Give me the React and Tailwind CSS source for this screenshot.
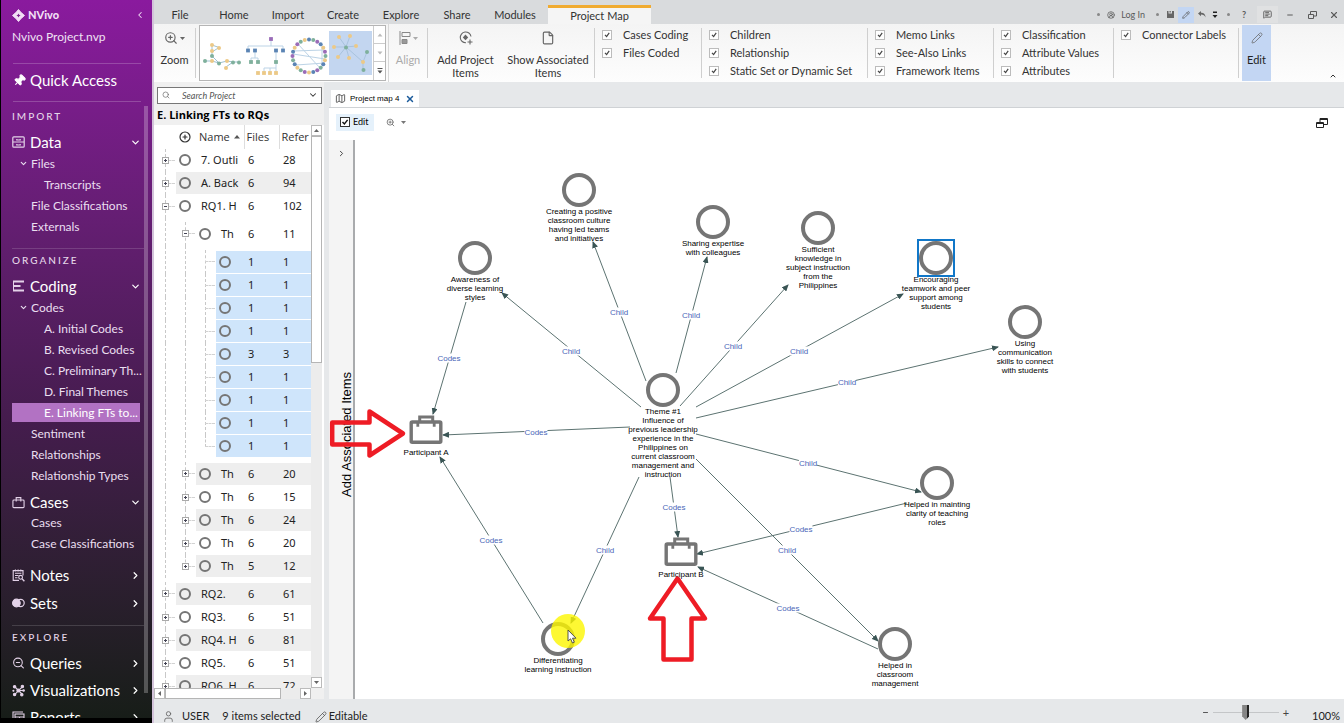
import React from "react";
import {
  Pin, ChevronLeft, ChevronRight, ChevronDown, ChevronUp, ZoomIn, ZoomOut,
  File as FileIcon, Pencil, User, CircleUserRound, MessageSquareText, Minus, X, Search,
  Map as MapIcon, CirclePlus,
} from "lucide-react";

/* ---------- sidebar ---------- */

function Logo() {
  return (
    <svg viewBox="0 0 14 14" className="size-[13px]" fill="#f1dff5">
      <path d="M7 0.500L9.300 3.200L10.800 4.700L13.500 7L10.800 9.300L9.300 10.800L7 13.500L4.700 10.800L3.200 9.300L0.500 7L3.200 4.700L4.700 3.200Z" stroke="#f1dff5" strokeLinejoin="round" />
      <path d="M7 4.800L7.700 6.300L9.200 7L7.700 7.700L7 9.200L6.300 7.700L4.800 7L6.300 6.300Z" fill="#7a1c8d" />
    </svg>
  );
}

function DrawerIcon() {
  return (
    <svg viewBox="0 0 13 12" className="h-3 w-[13px]" fill="none" stroke="currentColor" strokeWidth="1.2">
      <rect x="0.8" y="0.8" width="11.4" height="10.4" rx="1" />
      <path d="M1 6H12M4.8 3V4H8.2V3M4.8 8V9H8.2V8" />
    </svg>
  );
}

function CodingIcon() {
  return (
    <svg viewBox="0 0 13 12" className="h-3 w-[13px]" fill="none" stroke="currentColor" strokeWidth="1.8">
      <path d="M1 1.500H12M1 6H8.500M1 10.500H12" />
      <path d="M1.500 1V11" strokeWidth="1" />
    </svg>
  );
}

function CaseIcon() {
  return (
    <svg viewBox="0 0 14 13" className="h-[13px] w-[14px]" fill="none" stroke="currentColor" strokeWidth="1.2">
      <rect x="1" y="3.8" width="12" height="8.2" rx="1" />
      <path d="M4.500 5.500V1.200H9.500V5.500" />
    </svg>
  );
}

function NotesIcon() {
  return (
    <svg viewBox="0 0 13 13" className="size-[13px]" fill="none" stroke="currentColor" strokeWidth="1.1">
      <path d="M7 11.400H1.200V1.600H11V6.500M3.400 0.400V2.400M6.100 0.400V2.400M8.800 0.400V2.400M3 4.300H9.400M3 6.500H6.500M3 8.700H5.500" />
      <circle cx="8.600" cy="8.300" r="1.900" />
      <path d="M10 9.800L12.400 12.200" strokeWidth="1.400" />
    </svg>
  );
}

function SetsIcon() {
  return (
    <svg viewBox="0 0 13 10" className="h-[10px] w-[13px]" fill="none" stroke="currentColor" strokeWidth="1.2">
      <circle cx="4.4" cy="5" r="3.8" fill="currentColor" />
      <circle cx="8.6" cy="5" r="3.6" />
    </svg>
  );
}

function VisualIcon() {
  return (
    <svg viewBox="0 0 13 13" className="size-[13px]" fill="currentColor" stroke="currentColor" strokeWidth="1.1">
      <path d="M2.5 2.5L6.5 6.5L10.8 2.5M6.5 6.5L2.5 10.8M6.5 6.5L10.5 10.5M6.5 6.5H11.5" fill="none" />
      <circle cx="2.6" cy="2.8" r="1.2" /><circle cx="10.4" cy="2.4" r="1.2" />
      <circle cx="2.6" cy="10.4" r="1.2" /><circle cx="9.8" cy="10.8" r="1.2" />
      <circle cx="6.4" cy="6.5" r="1.5" /><circle cx="1.4" cy="6.8" r="0.5" /><circle cx="11.6" cy="6.5" r="0.8" />
    </svg>
  );
}

function ReportIcon() {
  return (
    <svg viewBox="0 0 13 13" className="size-[13px]" fill="none" stroke="currentColor" strokeWidth="1.1">
      <path d="M1 10V1H11" />
      <rect x="3" y="3" width="9" height="9" />
      <path d="M3 6H12M7.5 6V12" />
    </svg>
  );
}

function Section({ icon, label, open }) {
  return (
    <button type="button" className="flex h-7 w-full items-center gap-[5px] pr-[3px] text-left text-[15px] leading-[18px] text-white">
      <span className="flex w-[13px] justify-center text-[#e3d2e8]">{icon}</span>
      <span className="grow">{label}</span>
      {open ? <ChevronDown className="size-[11px]" strokeWidth={2.6} /> : <ChevronRight className="size-[11px]" strokeWidth={2.6} />}
    </button>
  );
}

function Leaf({ label, level = 1, open, active }) {
  return (
    <a
      href="#"
      className={
        "flex h-[21px] w-[128px] items-center whitespace-nowrap text-xs leading-4 text-[#eadff0] " +
        (level === 2 ? "pl-8 " : open ? "pl-[7px] " : "pl-[19px] ")
      }
    >
      {active ? (
        <span className="-ml-8 flex h-[19px] w-[128px] items-center bg-[#b272c3] pl-8 text-white">{label}</span>
      ) : (
        <>
          {open && <ChevronDown className="mr-[3px] size-[9px]" strokeWidth={3} />}
          {label}
        </>
      )}
    </a>
  );
}

function Sidebar() {
  return (
    <nav className="flex w-[152px] shrink-0 flex-col overflow-hidden border-b-[5px] border-l border-black bg-linear-to-b from-[#8a1a9e] via-[#451c4e] via-58% to-[#171d18] font-[Lato,sans-serif]">
      <div className="pr-[7px] pl-[11px]">
        <div className="flex h-[30px] items-center gap-[3px] text-[11px] font-black text-[#f1dff5]">
          <Logo />
          <span className="grow">NVivo</span>
          <button type="button" aria-label="Collapse navigation"><ChevronLeft className="size-[10px]" strokeWidth={2.5} /></button>
        </div>
        <div className="h-[33px] pr-2 text-xs leading-[14px] text-[#f0e2f4]">Nvivo Project.nvp</div>
        <div className="mr-1 ml-px flex h-[39px] items-center gap-1 border-y border-white/20 pb-1 text-[15px] text-white">
          <Pin className="size-[13px] rotate-45" fill="currentColor" />
          Quick Access
        </div>
      </div>
      <div className="flex min-h-0 grow pl-[11px]">
        <div className="w-[132px] shrink-0 overflow-hidden">
          <div>
            <h2 className="h-[26px] pt-2 text-[10px] leading-3 font-medium tracking-[0.2em] text-[#e4d6e8]">IMPORT</h2>
            <Section icon={<DrawerIcon />} label="Data" open />
            <div className="-mt-[3px]">
              <Leaf label="Files" open />
              <Leaf label="Transcripts" level={2} />
              <Leaf label="File Classifications" />
              <Leaf label="Externals" />
            </div>
          </div>
          <div className="pt-[11px]">
            <h2 className="h-6 border-t border-white/15 pt-[5px] text-[10px] leading-3 font-medium tracking-[0.2em] text-[#e4d6e8]">ORGANIZE</h2>
            <Section icon={<CodingIcon />} label="Coding" open />
            <div className="-mt-[3px]">
              <Leaf label="Codes" open />
              <Leaf label="A. Initial Codes" level={2} />
              <Leaf label="B. Revised Codes" level={2} />
              <Leaf label="C. Preliminary Th..." level={2} />
              <Leaf label="D. Final Themes" level={2} />
              <Leaf label="E. Linking FTs to..." level={2} active />
              <Leaf label="Sentiment" />
              <Leaf label="Relationships" />
              <Leaf label="Relationship Types" />
            </div>
            <div className="pt-[2px]">
              <Section icon={<CaseIcon />} label="Cases" open />
              <div className="-mt-1">
                <Leaf label="Cases" />
                <Leaf label="Case Classifications" />
              </div>
            </div>
            <div className="pt-[7px]">
              <Section icon={<NotesIcon />} label="Notes" />
              <Section icon={<SetsIcon />} label="Sets" />
            </div>
          </div>
          <div className="pt-2">
            <h2 className="h-6 border-t border-white/15 pt-[5px] text-[10px] leading-3 font-medium tracking-[0.2em] text-[#e4d6e8]">EXPLORE</h2>
            <div className="-space-y-px">
              <Section icon={<ZoomOut className="size-[14px]" />} label="Queries" />
              <Section icon={<VisualIcon />} label="Visualizations" />
              <Section icon={<ReportIcon />} label="Reports" />
            </div>
          </div>
        </div>
        <div className="mt-1 mb-[25px] w-1 bg-white/25" />
      </div>
    </nav>
  );
}

/* ---------- title bar and ribbon ---------- */

const tabs = [
  ["File", "w-[52px]"], ["Home", "w-[56px]"], ["Import", "w-[52px]"], ["Create", "w-[58px]"],
  ["Explore", "w-[58px]"], ["Share", "w-[54px]"], ["Modules", "w-[62px]"],
];

function Dot() {
  return <span className="block size-[3px] rounded-full bg-[#888]" />;
}

function TitleBar() {
  return (
    <header className="flex h-6 shrink-0 items-end bg-[#d9dbdd] text-[11px] text-[#333]">
      <div className="flex h-[19px] items-center">
        {tabs.map(([t, w]) => (
          <button key={t} type="button" className={"text-center leading-[19px] " + w}>{t}</button>
        ))}
      </div>
      <button type="button" className="ml-[2px] h-[19px] w-[103px] border-t-[3px] border-[#f0ab31] bg-[#f5f5f5] leading-[14px]">Project Map</button>
      <div className="ml-auto flex h-[19px] items-center pr-[5px] text-[#5a5a5a]">
        <Dot />
        <button type="button" className="ml-[7px] flex items-center gap-[6px] text-[9px]">
          <CircleUserRound className="size-2" strokeWidth={2.2} />Log In
        </button>
        <span className="ml-[11px]"><Dot /></span>
        <button type="button" aria-label="Save" className="ml-2">
          <svg viewBox="0 0 7 7" className="size-[7px]" fill="#666"><path d="M0 0H1.500V2.500H5V0H7V7H0ZM2.500 0H3.800V1.500H2.500Z" /></svg>
        </button>
        <button type="button" aria-label="Edit mode" className="ml-1 bg-[#c3d6f3] p-[4px]"><Pencil className="size-2" strokeWidth={2.2} /></button>
        <button type="button" aria-label="Undo" className="ml-1">
          <svg viewBox="0 0 8 7" className="h-[7px] w-2" fill="#666"><path d="M0 2.500L3 0V1.700C5.500 1.700 7.500 3 7.500 6.500C6.500 4.500 5.500 3.600 3 3.600V5.200Z" /></svg>
        </button>
        <button type="button" aria-label="Customize" className="mx-[6px]">
          <svg viewBox="0 0 6 8" className="h-2 w-[6px]" fill="#222"><path d="M1 0.5H5V2H1ZM0.5 4H5.5L3 7Z" /></svg>
        </button>
        <span className="ml-[3px]"><Dot /></span>
        <button type="button" aria-label="Help" className="ml-[9px] w-[10px] text-[9px] font-bold">?</button>
        <button type="button" aria-label="Feedback" className="ml-2 bg-[#e0e1e2] px-[6px] py-[4px]"><MessageSquareText className="size-[9px]" strokeWidth={2.4} /></button>
        <button type="button" aria-label="Minimize" className="ml-[8px]"><Minus className="size-2" strokeWidth={3} /></button>
        <button type="button" aria-label="Restore" className="ml-[14px]">
          <svg viewBox="0 0 9 8" className="h-2 w-[9px]" fill="none" stroke="currentColor"><path d="M0.5 3.5H5.5V7.5H0.5ZM2.5 3.5V0.5H8.5V5H5.5" /></svg>
        </button>
        <button type="button" aria-label="Close" className="ml-[12px]"><X className="size-[10px]" strokeWidth={2.6} /></button>
      </div>
    </header>
  );
}

function Check({ label, id }) {
  return (
    <label htmlFor={id} className="flex h-[18px] items-center whitespace-nowrap text-[11px] leading-[18px] text-[#333]">
      <span className="mr-[11px] grid size-[10px] place-items-center">
        <input id={id} type="checkbox" defaultChecked className="col-start-1 row-start-1 size-[10px] appearance-none border border-[#bcbcbc] bg-white" />
        <svg viewBox="0 0 8 8" className="pointer-events-none col-start-1 row-start-1 size-2" fill="none" stroke="#444" strokeWidth="1.2">
          <path d="M2 3.8L3.6 5.6L6.2 1.8" />
        </svg>
      </span>
      {label}
    </label>
  );
}

const checkGroups = [
  { w: "w-[106px]", items: ["Cases Coding", "Files Coded"] },
  { w: "w-[165px]", items: ["Children", "Relationship", "Static Set or Dynamic Set"] },
  { w: "w-[125px]", items: ["Memo Links", "See-Also Links", "Framework Items"] },
  { w: "w-[119px]", items: ["Classification", "Attribute Values", "Attributes"] },
  { w: "w-[124px]", items: ["Connector Labels"] },
];

const Y = "#ecc987", G = "#7fb09c", B = "#5b84b4", P = "#9a6cb8";

function Dots({ pts }) {
  return pts.map(([x, y, c], i) => <circle key={i} cx={x} cy={y} r="2" fill={c} />);
}
function Squares({ pts }) {
  return pts.map(([x, y, c], i) => <rect key={i} x={x - 1.9} y={y - 1.9} width="3.8" height="3.8" fill={c} />);
}

function LayoutGallery() {
  const ring = Array.from({ length: 24 }, (_, i) => {
    const a = (i / 24) * Math.PI * 2;
    return [23 + 16.5 * Math.cos(a), 22 + 16.5 * Math.sin(a), [G, Y, B, G, P, B, Y, P][i % 8]];
  });
  return (
    <div className="my-[1px] flex w-[187px] border border-[#b5b5b5] bg-white">
      <button type="button" aria-label="Organic layout" className="w-[43px] pt-[5px]">
        <svg viewBox="0 0 43 44" className="h-[44px] w-[43px]">
          <path d="M5 27H12L19 29L27 27L33 28H39M26 33L33 28M19 29L12 22V11L19 13.500L12 18" fill="none" stroke="#9fc0d0" />
          <Dots pts={[[5, 27, G], [12, 27, Y], [19, 29.5, G], [27, 27, Y], [33, 28.500, G], [39, 28.500, G], [26, 34, Y], [12, 22, G], [12, 17, Y], [12, 11, Y], [19, 14, Y]]} />
        </svg>
      </button>
      <button type="button" aria-label="Hierarchical layout" className="w-[43px] pt-[5px]">
        <svg viewBox="0 0 43 44" className="h-[44px] w-[43px]">
          <path d="M28 5V12M5 16V12H40V16M12 16V24M8 28V24H15V28M33 16V34M21 38V34H33V38M27 34V38" fill="none" stroke="#bcd3e6" />
          <Squares pts={[[28, 5, P], [5, 16.500, B], [12, 16.500, B], [33, 16.500, B], [40, 16.500, B], [8, 28, G], [15, 28, G], [33, 28, G], [15, 39, Y], [21, 39, Y], [27, 39, Y], [33, 39, Y]]} />
        </svg>
      </button>
      <button type="button" aria-label="Circular layout" className="w-[43px] pt-[5px]">
        <svg viewBox="0 0 43 44" className="h-[44px] w-[43px]">
          <path d="M12 10L34 34M36 11V34M7 17L38 16M7 20L39 25M10 31L39 29" fill="none" stroke="#bcd3e6" />
          <Dots pts={ring} />
        </svg>
      </button>
      <button type="button" aria-label="Directed layout" className="my-[5px] w-[43px] bg-[#c3d6f0]">
        <svg viewBox="0 0 43 43" className="h-[43px] w-[43px]">
          <path d="M17 15L10 5M17 15L21 4M17 15L5 15M17 15L27 14M17 15L9 25M17 15L20 26M17 15L34 30L38 20M34 30V38" fill="none" stroke="#a9c3dd" />
          <Dots pts={[[17, 15.500, G], [10, 5, Y], [21, 4, Y], [5, 15, Y], [27, 14, Y], [9, 25, Y], [20, 26, Y], [34, 30, Y], [38, 20, G], [34.500, 38, G]]} />
        </svg>
      </button>
      <div className="ml-auto grid w-3 grid-rows-3 border-l border-[#ccc] text-[#888]">
        {["Previous layouts", "Next layouts", "More layouts"].map((l, i) => (
          <button key={l} type="button" aria-label={l} className="grid place-items-center border-b border-[#ccc] last:border-0">
            <svg viewBox="0 0 6 6" className="size-[6px]" fill={i === 2 ? "#555" : "#bbb"}>
              {i === 0 && <path d="M0.500 4.500H5.500L3 1.500Z" />}
              {i === 1 && <path d="M0.500 1.500H5.500L3 4.500Z" />}
              {i === 2 && <path d="M0.500 2.500H5.500L3 5.500ZM0.500 0H5.500V1H0.500Z" />}
            </svg>
          </button>
        ))}
      </div>
    </div>
  );
}

function AddItemsIcon() {
  return (
    <svg viewBox="0 0 14 14" className="size-[14px]" fill="none" stroke="#666" strokeWidth="1.1">
      <path d="M12 5.500A5.400 5.400 0 1 0 7 11.800" />
      <path d="M6.500 3.600L9.200 6.400L6.500 9.200L3.800 6.400Z" fill="#666" stroke="none" />
      <path d="M11 8.500V13.500M8.500 11H13.500" />
    </svg>
  );
}

function Sep() {
  return <div className="my-1 w-px shrink-0 bg-[#cfcfcf]" />;
}

function Ribbon() {
  return (
    <section className="flex h-[58px] shrink-0 bg-linear-to-b from-[#f4f4f4] to-[#fdfdfd] text-[11px] leading-[13px] text-[#333]">
      <button type="button" className="flex w-[41px] shrink-0 flex-col items-center pt-[7px]">
        <span className="flex items-center gap-[2px] text-[#666]"><ZoomIn className="size-[14px]" /><svg viewBox="0 0 5 3" className="h-[3px] w-[5px]" fill="currentColor"><path d="M0 0H5L2.500 3Z" /></svg></span>
        <span className="pt-2">Zoom</span>
      </button>
      <Sep />
      <div className="ml-[3px] flex shrink-0"><LayoutGallery /></div>
      <button type="button" className="ml-[2px] flex w-[39px] shrink-0 flex-col items-center border-l border-[#d8d8d8] pt-[7px] text-[#aaa]">
        <span className="flex items-center gap-[2px]">
          <svg viewBox="0 0 12 14" className="h-[14px] w-3" fill="none" stroke="#888"><path d="M1 0V14M3 1.500H11V5.500H3Z" /><path d="M3 8.500H8V12.500H3Z" fill="#999" /></svg>
          <svg viewBox="0 0 5 3" className="h-[3px] w-[5px]" fill="currentColor"><path d="M0 0H5L2.500 3Z" /></svg>
        </span>
        <span className="pt-2">Align</span>
      </button>
      <Sep />
      <button type="button" className="flex w-[75px] shrink-0 flex-col items-center pt-[7px]">
        <AddItemsIcon />
        <span className="w-16 pt-2">Add Project Items</span>
      </button>
      <button type="button" className="flex w-[90px] shrink-0 flex-col items-center pt-[7px]">
        <FileIcon className="size-[14px] text-[#666]" />
        <span className="w-[88px] pt-2">Show Associated Items</span>
      </button>
      <div className="w-px" />
      {checkGroups.map((g, i) => (
        <React.Fragment key={i}>
          <Sep />
          <div className={"shrink-0 pt-[2px] pl-[7px] " + g.w}>
            {g.items.map((t, j) => <Check key={t} label={t} id={"opt-" + i + "-" + j} />)}
          </div>
        </React.Fragment>
      ))}
      <Sep />
      <button type="button" className="my-[1px] ml-[3px] flex w-[29px] shrink-0 flex-col items-center bg-[#c3d6f3] pt-[7px] text-[#222]">
        <Pencil className="size-3 text-[#666]" strokeWidth={1.5} />
        <span className="pt-[9px]">Edit</span>
      </button>
      <button type="button" aria-label="Collapse ribbon" className="mt-auto ml-auto pr-[7px] pb-[2px]"><ChevronUp className="size-2" strokeWidth={3} /></button>
    </section>
  );
}

/* ---------- list view ---------- */

const sel = [1, 1, 1, 1, 3, 1, 1, 1, 1].map((n, i) => ({
  level: 2, name: "", files: n, refs: n, sel: true, gap: i === 0, last: i === 8,
}));

const rows = [
  { level: 0, name: "7. Outli", files: 6, refs: 28 },
  { level: 0, name: "A. Back", files: 6, refs: 94, alt: true },
  { level: 0, name: "RQ1. H", files: 6, refs: 102, open: true },
  { level: 1, name: "Th", files: 6, refs: 11, open: true, gap: true },
  ...sel,
  { level: 1, name: "Th", files: 6, refs: 20, alt: true, gap: true },
  { level: 1, name: "Th", files: 6, refs: 15 },
  { level: 1, name: "Th", files: 6, refs: 24, alt: true },
  { level: 1, name: "Th", files: 6, refs: 20 },
  { level: 1, name: "Th", files: 5, refs: 12, alt: true, last: true },
  { level: 0, name: "RQ2.", files: 6, refs: 61, alt: true, gap: true },
  { level: 0, name: "RQ3.", files: 6, refs: 51 },
  { level: 0, name: "RQ4. H", files: 6, refs: 81, alt: true },
  { level: 0, name: "RQ5.", files: 6, refs: 51 },
  { level: 0, name: "RQ6. H", files: 6, refs: 72, alt: true },
];

function Guide({ own, leaf, open, last, gap }) {
  const top = gap ? "pt-[4px]" : "";
  return (
    <span className={"grid h-full w-5 shrink-0 " + (own ? top : "")}>
      <span className={"col-start-1 row-start-1 ml-[10px] border-l border-dashed border-[#c8c8c8] " + (own && last ? "h-3" : "h-full")} />
      {own && <span className="col-start-1 row-start-1 ml-[10px] h-3 border-b border-dashed border-[#d2d2d2]" />}
      {own && !leaf && (
        <svg viewBox="0 0 7 7" className="col-start-1 row-start-1 mt-2 ml-[7px] size-[7px]" fill="#fff" stroke="#aaa">
          <rect x="0.5" y="0.5" width="6" height="6" />
          <path d={open ? "M2 3.500H5" : "M2 3.500H5M3.500 2V5"} stroke="#445" />
        </svg>
      )}
    </span>
  );
}

function Row({ r }) {
  const bg = r.sel ? "bg-[#cfe5fb]" : r.alt ? "bg-[#eeeeee]" : "bg-white";
  const h = r.gap ? "h-7" : "h-[23px]";
  const cell = "flex h-[22px] items-center " + bg;
  return (
    <tr className={h}>
      <td className="p-0">
        <div className={"flex items-end pl-px " + h}>
          {Array.from({ length: r.level + 1 }, (_, i) => (
            <Guide key={i} own={i === r.level} leaf={r.level === 2} open={r.open} last={r.last} gap={r.gap} />
          ))}
          <div className={"mb-px ml-px grow gap-[10px] overflow-hidden pl-[3px] whitespace-nowrap " + cell}>
            <span className="size-3 shrink-0 rounded-full border-2 border-[#757575]" />
            {r.name}
          </div>
        </div>
      </td>
      <td className="p-0 align-bottom"><div className={"mb-px pl-1 " + cell}>{r.files}</div></td>
      <td className="p-0 align-bottom"><div className={"mb-px pl-1 " + cell}>{r.refs}</div></td>
    </tr>
  );
}

function ScrollBtn({ label, d, className }) {
  return (
    <button type="button" aria-label={label} className={"grid size-[11px] place-items-center border border-[#bbb] bg-white " + (className || "")}>
      <svg viewBox="0 0 5 5" className="size-[5px]" fill="#666"><path d={d} /></svg>
    </button>
  );
}

function ListView() {
  return (
    <section className="flex w-[170px] shrink-0 flex-col bg-[#f0f0f0] pt-[5px] font-['Noto_Sans',sans-serif]">
      <div className="mr-[2px] ml-[3px] flex h-[17px] items-center border border-[#777] bg-white px-1">
        <Search className="size-2 text-[#666]" />
        <input aria-label="Search Project" placeholder="Search Project" className="ml-3 w-0 grow bg-transparent font-[Lato,sans-serif] text-[9px] italic outline-none placeholder:text-[#555]" />
        <ChevronDown className="-mr-px size-[10px] text-[#333]" strokeWidth={2.5} />
      </div>
      <h1 className="h-[22px] pl-[3px] font-['Open_Sans',sans-serif] text-[11px] leading-[21px] font-bold text-black">E. Linking FTs to RQs</h1>
      <div className="flex min-h-0 grow bg-white">
        <div className="min-h-0 w-[157px] overflow-hidden">
          <table className="w-full table-fixed border-collapse text-[11px] leading-4 text-[#222]">
            <colgroup><col className="w-[90px]" /><col className="w-[35px]" /><col /></colgroup>
            <thead>
              <tr className="h-6 font-['Open_Sans',sans-serif] text-[#333]">
                <th className="p-0 text-left font-normal">
                  <span className="flex items-center pl-[25px]">
                    <CirclePlus className="size-[12px]" strokeWidth={2.4} />
                    <span className="ml-2">Name</span>
                    <svg viewBox="0 0 6 4" className="ml-1 h-1 w-[6px]" fill="#555"><path d="M0 3.500H6L3 0Z" /></svg>
                  </span>
                </th>
                <th className="border-l border-[#ddd] p-0 pl-[2px] text-left font-normal">Files</th>
                <th className="overflow-hidden border-l border-[#ddd] p-0 pl-[2px] text-left font-normal">Refer</th>
              </tr>
            </thead>
            <tbody>{rows.map((r, i) => <Row key={i} r={r} />)}</tbody>
          </table>
        </div>
        <div className="flex w-[11px] flex-col bg-[#ececec]">
          <ScrollBtn label="Scroll up" d="M0 4H5L2.500 1Z" />
          <div className="h-[227px] border border-[#b5b5b5] bg-white" />
          <ScrollBtn label="Scroll down" d="M0 1H5L2.500 4Z" className="mt-auto" />
        </div>
      </div>
      <div className="flex h-[11px] w-[157px] bg-[#ececec]">
        <ScrollBtn label="Scroll left" d="M4 0V5L1 2.500Z" />
        <div className="w-[116px] border border-[#b5b5b5] bg-white" />
        <ScrollBtn label="Scroll right" d="M1 0V5L4 2.500Z" className="ml-auto" />
      </div>
    </section>
  );
}

/* ---------- project map ---------- */

/* Distance from the diagram's origin to the visible corner of the canvas. */
const view = { x: 355, y: 140 };

const nodes = [
  { x: 579, y: 190, lines: ["Creating a positive", "classroom culture", "having led teams", "and initiatives"] },
  { x: 475, y: 258, lines: ["Awareness of", "diverse learning", "styles"] },
  { x: 713, y: 222, lines: ["Sharing expertise", "with colleagues"] },
  { x: 818, y: 228, lines: ["Sufficient", "knowledge in", "subject instruction", "from the", "Philippines"] },
  { x: 936, y: 258, lines: ["Encouraging", "teamwork and peer", "support among", "students"], selected: true },
  { x: 1025, y: 322, lines: ["Using", "communication", "skills to connect", "with students"] },
  { x: 663, y: 390, lines: ["Theme #1", "Influence of", "previous leadership", "experience in the", "Philippines on", "current classroom", "management and", "instruction"] },
  { x: 937, y: 483, lines: ["Helped in mainting", "clarity of teaching", "roles"] },
  { x: 895, y: 644, lines: ["Helped in", "classroom", "management"] },
  { x: 558, y: 639, lines: ["Differentiating", "learning instruction"] },
  { x: 426, y: 431, lines: ["Participant A"], isCase: true },
  { x: 681, y: 553, lines: ["Participant B"], isCase: true },
];

const edges = [
  [641, 407, 502, 293, "Child", 571, 351],
  [646, 381, 593, 242, "Child", 619, 312],
  [676, 373, 707, 257, "Child", 691, 315],
  [680, 406, 788, 285, "Child", 733, 346],
  [696, 407, 903, 294, "Child", 799, 351],
  [696, 418, 998, 347, "Child", 847, 382],
  [696, 434, 921, 492, "Child", 808, 463],
  [696, 459, 878, 641, "Child", 787, 550],
  [639, 477, 571, 623, "Child", 605, 550],
  [630, 427, 443, 435, "Codes", 536, 432],
  [670, 477, 678, 537, "Codes", 674, 507],
  [466, 302, 433, 414, "Codes", 449, 358],
  [543, 623, 440, 457, "Codes", 491, 540],
  [907, 503, 697, 554, "Codes", 801, 529],
  [878, 649, 698, 567, "Codes", 788, 608],
];

function MapNode({ n }) {
  return (
    <div className="absolute w-[34px]" style={{ left: n.x - view.x - 17, top: n.y - view.y - 17 }}>
      <div className="flex flex-col items-center">
        {n.isCase ? (
          <svg viewBox="0 0 34 34" className="size-[34px]" fill="none" stroke="#757575">
            <rect x="2.2" y="8" width="29.600" height="20.300" rx="1" strokeWidth="3.400" />
            <path d="M10.700 8V3H23.700V8" strokeWidth="3" />
            <path d="M8.800 8V12.800M25.200 8V12.800" strokeWidth="2.800" />
          </svg>
        ) : (
          <span className="size-[34px] rounded-full border-4 border-[#757575]" />
        )}
        <span className="flex flex-col items-center text-[8px] leading-[9px] whitespace-nowrap text-black">
          {n.lines.map((l) => <span key={l}>{l}</span>)}
        </span>
      </div>
      {n.selected && <span className="absolute -top-[2px] -left-[2px] size-[38px] border-2 border-[#1177c8]" />}
    </div>
  );
}

function Canvas() {
  return (
    <div className="relative min-w-0 grow bg-white font-['Liberation_Sans',sans-serif]">
      <svg className="absolute inset-0 size-full overflow-visible">
        <defs>
          <marker id="tip" markerWidth="7" markerHeight="6" refX="6" refY="3" orient="auto" markerUnits="userSpaceOnUse">
            <path d="M0 0L7 3L0 6Z" fill="#3a5555" />
          </marker>
        </defs>
        {edges.map(([a, b, c, d], i) => (
          <line key={i} x1={a - view.x} y1={b - view.y} x2={c - view.x} y2={d - view.y} stroke="#5c7371" strokeWidth="1" markerEnd="url(#tip)" />
        ))}
      </svg>
      {edges.map(([, , , , t, x, y], i) => (
        <span key={i} className="absolute -translate-x-1/2 -translate-y-1/2 bg-white text-[8px] leading-[9px] text-[#4a66b8]" style={{ left: x - view.x, top: y - view.y }}>{t}</span>
      ))}
      {nodes.map((n, i) => <MapNode key={i} n={n} />)}
      <span className="absolute top-[474px] left-[196px] size-[34px] rounded-full bg-[#fdf600]/80" />
      <svg viewBox="0 0 10 15" className="absolute top-[489px] left-[212px] h-[15px] w-[10px]" fill="#fff" stroke="#444" strokeWidth="0.9">
        <path d="M1 1V12L3.600 9.800L5.500 14L7.300 13.200L5.500 9.200H9Z" />
      </svg>
      <svg viewBox="0 0 78 52" className="absolute top-[267px] -left-[26px] h-[52px] w-[78px]" fill="none" stroke="#ee1c25" strokeWidth="4.500">
        <path d="M3.200 15.500H40.500V4.500L74 26.500L40.500 48.500V37.500H3.200Z" strokeLinejoin="round" />
      </svg>
      <svg viewBox="0 0 62 88" className="absolute top-[434px] left-[292px] h-[88px] w-[62px]" fill="none" stroke="#ee1c25" strokeWidth="4.500">
        <path d="M30.500 4.500L58 44.500H44.500V85.500H16.500V44.500H3Z" strokeLinejoin="round" />
      </svg>
    </div>
  );
}

function MapView() {
  return (
    <section className="flex min-w-0 grow flex-col pl-[5px]">
      <div className="flex h-[25px] items-end pl-[2px]">
        <div className="flex h-[17px] w-[88px] items-center bg-white px-1">
          <MapIcon className="size-[11px] text-[#555]" />
          <span className="ml-1 grow font-['Liberation_Sans',sans-serif] text-[8px] whitespace-nowrap text-black">Project map 4</span>
          <button type="button" aria-label="Close tab"><X className="size-[10px] text-[#1b5b9b]" strokeWidth={3.5} /></button>
        </div>
      </div>
      <div className="flex min-h-0 grow flex-col border-t border-[#cfd2d5] bg-white">
        <div className="flex h-8 items-center px-[7px] pb-1">
          <label htmlFor="edit-mode" className="flex h-[17px] w-[38px] items-center gap-[3px] bg-[#e5f1fb] pl-1 text-[9px] text-black">
            <span className="grid size-[10px] place-items-center">
              <input id="edit-mode" type="checkbox" defaultChecked className="col-start-1 row-start-1 size-[10px] appearance-none border border-[#333] bg-white" />
              <svg viewBox="0 0 8 8" className="pointer-events-none col-start-1 row-start-1 size-2" fill="none" stroke="#111" strokeWidth="1.4"><path d="M1.500 4L3.400 6L6.600 1.800" /></svg>
            </span>
            Edit
          </label>
          <button type="button" aria-label="Zoom options" className="ml-3 flex items-center gap-[6px] text-[#777]">
            <ZoomIn className="size-[9px]" strokeWidth={2.4} />
            <svg viewBox="0 0 5 3" className="h-[3px] w-[5px]" fill="currentColor"><path d="M0 0H5L2.500 3Z" /></svg>
          </button>
          <button type="button" aria-label="Undock" className="mr-[9px] ml-auto">
            <svg viewBox="0 0 12 11" className="h-[11px] w-3" fill="none" stroke="#222"><path d="M0.500 5.500H7.500V10.500H0.500ZM0.500 6.500H7.500M4 5V1.500H11.500V7.500H8M4 2.500H11.500" /></svg>
          </button>
        </div>
        <div className="flex min-h-0 grow">
          <aside className="flex w-[26px] shrink-0 flex-col items-center border-r-2 border-[#a9abad] bg-[#f4f4f4] pt-[9px]">
            <button type="button" aria-label="Expand panel" className="text-[#444]"><ChevronRight className="size-[9px]" strokeWidth={2.6} /></button>
            <span className="mt-[214px] ml-3 rotate-180 font-['Liberation_Sans',sans-serif] text-[13px] leading-[14px] whitespace-nowrap text-black [writing-mode:vertical-rl]">Add Associated Items</span>
          </aside>
          <Canvas />
        </div>
      </div>
    </section>
  );
}

function StatusBar() {
  return (
    <footer className="flex h-6 shrink-0 items-end bg-[#e6e8ea] pl-2 text-[11px] leading-[14px] text-[#222]">
      <User className="mr-[7px] size-[13px] text-[#666]" strokeWidth={1.6} />
      <span>USER</span>
      <span className="ml-[13px]">9 items selected</span>
      <Pencil className="mr-[2px] ml-[14px] size-3 text-[#555]" strokeWidth={1.6} />
      <span>Editable</span>
      <div className="ml-auto flex items-center gap-1 pb-[3px] text-[#444]">
        <button type="button" aria-label="Zoom out"><Minus className="size-[7px]" strokeWidth={3} /></button>
        <input
          type="range" aria-label="Zoom" min="0" max="100" defaultValue="50"
          className="h-[15px] w-[66px] appearance-none bg-transparent bg-linear-to-b from-[#c4c6c8] to-[#c4c6c8] bg-[length:100%_1px] bg-center bg-no-repeat [&::-webkit-slider-thumb]:h-[15px] [&::-webkit-slider-thumb]:w-[7px] [&::-webkit-slider-thumb]:appearance-none [&::-webkit-slider-thumb]:border-r-2 [&::-webkit-slider-thumb]:border-[#222] [&::-webkit-slider-thumb]:bg-[#858585] [&::-webkit-slider-thumb]:[clip-path:polygon(0_0,100%_0,100%_75%,50%_100%,0_75%)]"
        />
        <button type="button" aria-label="Zoom in" className="text-[11px] leading-[10px]">+</button>
      </div>
      <span className="mr-1 ml-[23px]">100%</span>
    </footer>
  );
}

export default function App() {
  return (
    <div className="flex h-screen w-full overflow-hidden bg-[#e6e8ea] font-[Lato,sans-serif]">
      <Sidebar />
      <main className="flex min-w-0 grow flex-col border-l-2 border-[#d3c3da]">
        <TitleBar />
        <Ribbon />
        <div className="flex min-h-0 grow">
          <ListView />
          <MapView />
        </div>
        <StatusBar />
      </main>
    </div>
  );
}
